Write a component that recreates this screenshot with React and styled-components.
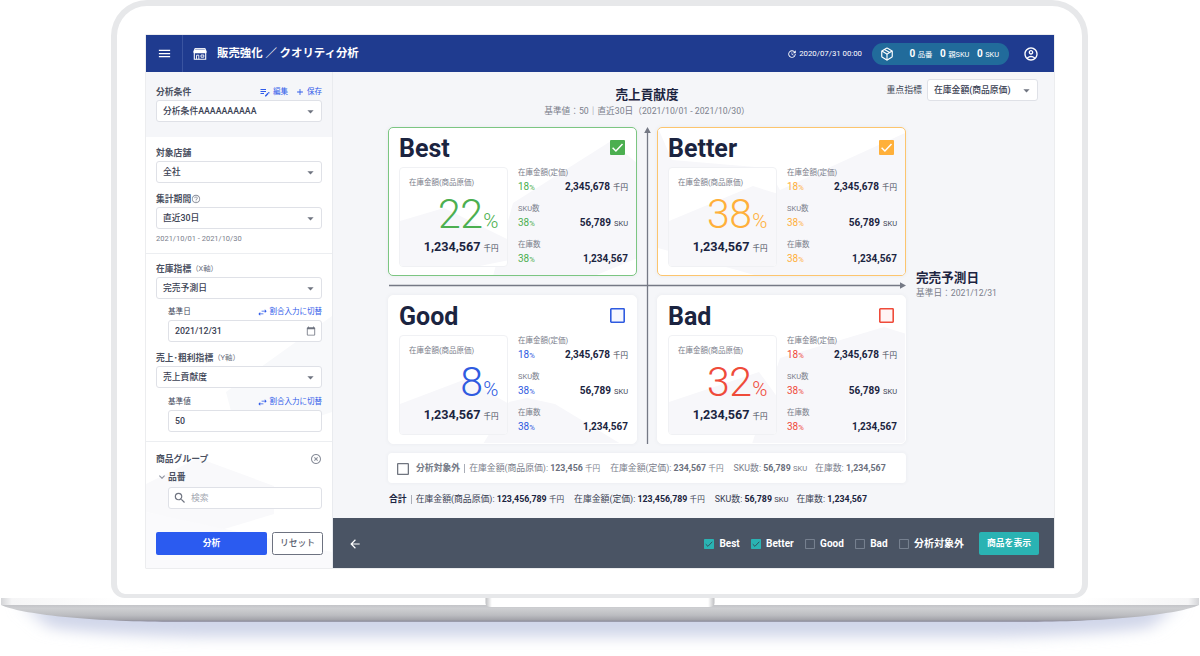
import React from "react";
import styled, { createGlobalStyle } from "styled-components";
import {
    MdAdd,
    MdArrowBack,
    MdArrowDropDown,
    MdCalendarToday,
    MdEditNote,
    MdHelpOutline,
    MdHighlightOff,
    MdKeyboardArrowDown,
    MdMenu,
    MdOutlineAccountCircle,
    MdSearch,
    MdSwapHoriz,
    MdUpdate,
} from "react-icons/md";
import { LuPackage } from "react-icons/lu";

const GlobalStyle = createGlobalStyle`
    * {
        box-sizing: border-box;
    }
    body {
        margin: 0;
        background: #fff;
        color: #3f4656;
        font-family: Roboto, "Noto Sans CJK JP", sans-serif;
        font-size: 8.8px;
        line-height: 1;
    }
    svg {
        display: block;
        flex-shrink: 0;
    }
    button {
        font-family: inherit;
        line-height: 1;
        padding: 0;
    }
`;

/* ---------- laptop ---------- */

const Stage = styled.div`
    width: 1200px;
    height: 656px;
    overflow: hidden;
    background: #fff;
`;

const Lid = styled.div`
    width: 977px;
    height: 598px;
    margin-left: 111px;
    padding: 29px 28px 26px 29px;
    border: 6px solid #e7e8ea;
    border-bottom-width: 4px;
    border-radius: 36px 36px 14px 14px;
`;

const Screen = styled.div`
    width: 908px;
    height: 533px;
    display: grid;
    grid-template-rows: 37px 496px;
    background: #f5f6f9;
    box-shadow: 0 0 0 0.5px #d9dbe0;
`;

/* ---------- header ---------- */

const Header = styled.header`
    display: flex;
    align-items: center;
    background: #1f3b8f;
    color: #fff;
`;

const MenuButton = styled.div`
    width: 37px;
    height: 100%;
    display: flex;
    align-items: center;
    justify-content: center;
    border-right: 1px solid #3a54a0;
`;

const PageIcon = styled.div`
    margin-left: 10px;
`;

const PageTitle = styled.h1`
    margin: 0 auto 0 10px;
    font-size: 11.4px;
    font-weight: 700;
    white-space: nowrap;
`;

const UpdatedAt = styled.div`
    display: flex;
    align-items: center;
    gap: 2px;
    margin-right: 10px;
    padding-top: 1px;
    font-size: 7.8px;
    white-space: nowrap;
`;

const CountPill = styled.div`
    width: 137px;
    height: 22px;
    display: flex;
    align-items: center;
    padding: 0 10px 0 8px;
    margin-right: 14px;
    border-radius: 11px;
    background: #216b9b;

    svg {
        margin-right: auto;
    }
`;

const Count = styled.span`
    margin-left: 7.5px;
    font-size: 7.4px;
    white-space: nowrap;

    b {
        margin-right: 2.5px;
        font-size: 10px;
    }
`;

const Account = styled.div`
    margin-right: 15px;
`;

/* ---------- sidebar ---------- */

const Body = styled.div`
    display: grid;
    grid-template-columns: 187px 721px;
`;

const Sidebar = styled.aside`
    position: relative;
    display: flex;
    flex-direction: column;
    background: #fff;
    border-right: 1px solid #e9ebef;
`;

const Section = styled.section`
    position: relative;
    height: ${(p) => p.$height}px;
    padding: ${(p) => p.$top || 6}px 10px 0;
    background: ${(p) => p.$bg || "transparent"};
    border-top: ${(p) => (p.$line ? "1px solid #eceef1" : "none")};
`;

const LabelRow = styled.div`
    height: 18px;
    margin-top: ${(p) => p.$gap || 0}px;
    margin-left: ${(p) => (p.$indent ? 12 : 0)}px;
    padding-top: 2px;
    display: flex;
    align-items: center;
    font-size: ${(p) => (p.$indent ? 7.6 : 8.8)}px;
    font-weight: ${(p) => (p.$indent ? 400 : 700)};
    color: ${(p) => (p.$indent ? "#40475a" : "#4b5162")};
    white-space: nowrap;

    small {
        font-size: 7.4px;
        font-weight: 400;
        color: #6b7080;
    }
`;

const LinkButton = styled.span`
    display: inline-flex;
    align-items: center;
    gap: 2px;
    margin-left: ${(p) => (p.$first ? "auto" : "7px")};
    font-size: 7.5px;
    font-weight: 400;
    color: #2f5bea;
`;

const Field = styled.div`
    height: 22px;
    margin-left: ${(p) => (p.$indent ? 12 : 0)}px;
    margin-top: ${(p) => p.$gap || 0}px;
    width: ${(p) => p.$width || "auto"};
    padding: 0 ${(p) => (p.$select ? 3 : 5)}px 0 ${(p) => (p.$muted ? 4 : 6)}px;
    display: flex;
    align-items: center;
    gap: 4px;
    border: 1px solid #dfe1e7;
    border-radius: 3px;
    background: #fff;
    color: ${(p) => (p.$muted ? "#a4a8b2" : "#3a4153")};
    font-size: 8.8px;
    font-weight: ${(p) => (p.$muted ? 400 : 500)};
    white-space: nowrap;

    svg {
        color: #6f7480;
    }
    span {
        margin-right: auto;
    }
`;

const Hint = styled.div`
    height: 18px;
    padding-top: 1px;
    display: flex;
    align-items: center;
    font-size: 7.5px;
    color: #7b808c;
`;

const Actions = styled.div`
    position: relative;
    display: flex;
    gap: 5px;
    margin-top: auto;
    padding: 0 9px 13px 10px;
`;

const RunButton = styled.button`
    width: 111px;
    height: 23px;
    border: none;
    border-radius: 2px;
    background: #2b5bf0;
    color: #fff;
    font-size: 8.8px;
    font-weight: 700;
`;

const ResetButton = styled.button`
    width: 51px;
    height: 23px;
    border: 1px solid #6d7280;
    border-radius: 2.5px;
    background: #fff;
    color: #5d6270;
    font-size: 8.8px;
    font-weight: 500;
`;

/* ---------- main ---------- */

const Main = styled.main`
    display: grid;
    grid-template-rows: 446px 50px;
`;

const Content = styled.div`
    padding-left: 55px;
    background: #f5f6f9;
`;

const Toolbar = styled.div`
    height: 55px;
    padding: 7px 16px 0 0;
    display: flex;
    align-items: flex-start;
`;

const AxisTitle = styled.div`
    width: ${(p) => (p.$side ? "auto" : "240px")};
    margin: ${(p) => (p.$side ? "144px 0 0 10px" : "9px auto 0 139px")};
    text-align: ${(p) => (p.$side ? "left" : "center")};
    font-size: 8.7px;
    color: #7b808c;
    white-space: nowrap;

    h2 {
        margin: 0 0 ${(p) => (p.$side ? 4 : 5)}px;
        font-size: 12.6px;
        line-height: 14px;
        font-weight: 700;
        color: #1c2440;
    }
`;

const Metric = styled.div`
    display: flex;
    align-items: center;
    gap: 5px;
    font-size: 8.9px;
`;

const Board = styled.div`
    display: flex;
    align-items: flex-start;
`;

const Matrix = styled.div`
    position: relative;
    width: 518px;
    display: grid;
    grid-template-columns: 249px 249px;
    grid-template-rows: 149px 149px;
    gap: 19px;
    column-gap: 20px;
`;

const Axes = styled.svg`
    position: absolute;
    left: 0;
    top: 0;
`;

const Card = styled.article`
    position: relative;
    padding: 10px 9px 0 10px;
    overflow: hidden;
    border: 1px solid ${(p) => p.$border || "#fff"};
    border-radius: 5px;
    background: #fff;
    box-shadow: 0 0 4px rgba(50, 60, 90, 0.06);
`;

const Backdrop = styled.svg`
    position: absolute;
    left: 0;
    top: 0;
`;

const CardHead = styled.div`
    position: relative;
    height: 29px;
    display: flex;
    align-items: flex-start;
    justify-content: space-between;
    padding: 0 2px 0 0;

    h3 {
        margin: -2.5px 0 0;
        font-size: 25px;
        line-height: 26px;
        font-weight: 700;
        color: #1b2440;
    }
    svg {
        margin-top: 2px;
    }
`;

const CardBody = styled.div`
    position: relative;
    display: grid;
    grid-template-columns: 109px 110px;
    gap: 10px;
`;

const Kpi = styled.div`
    position: relative;
    height: 100px;
    overflow: hidden;
    padding: 11px 8.5px 0 9px;
    border: 1px solid #f0f1f4;
    border-radius: 4px;
    background: #fff;
    color: #7b808c;
    font-size: 7.5px;
    text-align: right;
    white-space: nowrap;
`;

const KpiLabel = styled.div`
    position: relative;
    text-align: left;
`;

const KpiRate = styled.div`
    position: relative;
    height: 54px;
    font-size: 41px;
    line-height: 54px;
    font-weight: 300;
    letter-spacing: -0.6px;
    color: ${(p) => p.$color};

    small {
        margin-left: 1px;
        font-size: 20.5px;
        letter-spacing: 0;
    }
`;

const Amount = styled.div`
    position: relative;
    font-size: 7.5px;
    color: #3f4656;
    white-space: nowrap;

    b {
        font-size: ${(p) => p.$size}px;
        color: #1b2440;
    }
    span {
        margin-left: 3px;
    }
`;

const Stat = styled.div`
    height: 36px;
    padding-top: 2px;
    font-size: 7.5px;
    color: #7b808c;
    white-space: nowrap;
`;

const StatLine = styled.div`
    display: flex;
    align-items: baseline;
    justify-content: space-between;
    margin-top: 5px;
`;

const Rate = styled.span`
    font-size: 10px;
    color: ${(p) => p.$color};

    small {
        font-size: 7.6px;
    }
`;

const Summary = styled.div`
    width: 518px;
    height: ${(p) => (p.$boxed ? 30 : 32)}px;
    margin-top: ${(p) => (p.$boxed ? 9 : 0)}px;
    padding-top: 1px;
    padding-left: ${(p) => (p.$boxed ? 9 : 1)}px;
    display: flex;
    align-items: center;
    border-radius: 4px;
    background: ${(p) => (p.$boxed ? "#fff" : "transparent")};
    box-shadow: ${(p) => (p.$boxed ? "0 0 4px rgba(50, 60, 90, 0.06)" : "none")};
    color: ${(p) => (p.$boxed ? "#7b808c" : "#3a4153")};
    font-size: 8.83px;
    white-space: nowrap;

    svg {
        margin-right: 7px;
    }
    strong {
        color: ${(p) => (p.$boxed ? "#757a86" : "#1b2440")};
    }
    i {
        width: 1px;
        height: 9px;
        margin: 0 4px;
        background: #a9adb7;
    }
`;

const SummaryItem = styled.span`
    margin-right: ${(p) => p.$gap}px;

    b {
        color: ${(p) => (p.$dark ? "#1b2440" : "#6b707d")};
    }
    small {
        font-size: 7.6px;
    }
`;

const Footer = styled.footer`
    display: flex;
    align-items: center;
    padding: 1px 15px 0 15px;
    background: #4a5464;
    color: #fff;
    font-size: 10px;
    font-weight: 700;

    > svg {
        margin-right: auto;
    }
`;

const Filter = styled.label`
    display: flex;
    align-items: center;
    gap: 5px;
    margin-left: 11.4px;
    white-space: nowrap;
`;

const ShowButton = styled.button`
    width: 60px;
    height: 23px;
    margin-left: 15px;
    border: none;
    border-radius: 2px;
    background: #2ab3b3;
    color: #fff;
    font-size: 8.8px;
    font-weight: 700;
`;

const cards = [
    {
        name: "Best",
        rate: 22,
        color: "#4caf50",
        border: "#7cc682",
        checked: true,
        shape: "104,148 124,75 222,13 249,36 249,130 205,148",
        inner: "0,53 44,40 109,72 109,92 70,100 0,100",
    },
    {
        name: "Better",
        rate: 38,
        color: "#ffb03a",
        border: "#fcc56e",
        checked: true,
        shape: "0,0 14,32 110,40 122,62 249,4 249,148 100,148 0,120",
        inner: "0,53 84,18 109,26 109,98 0,98",
    },
    {
        name: "Good",
        rate: 8,
        color: "#2f5be0",
        checked: false,
        shape: "94,148 120,106 138,102 166,108 232,148",
        inner: "0,68 66,43 109,68 109,100 0,100",
    },
    {
        name: "Bad",
        rate: 32,
        color: "#ef4b3a",
        checked: false,
        shape: "94,148 122,62 226,31 249,38 249,148",
        inner: "0,66 90,36 109,62 109,100 0,100",
    },
];

const stats = [
    { label: "在庫金額(定価)", rate: 18, value: "2,345,678", unit: "千円" },
    { label: "SKU数", rate: 38, value: "56,789", unit: "SKU" },
    { label: "在庫数", rate: 38, value: "1,234,567" },
];

const excluded = [
    { label: "在庫金額(商品原価)", value: "123,456", unit: "千円", gap: 10 },
    { label: "在庫金額(定価)", value: "234,567", unit: "千円", gap: 10 },
    { label: "SKU数", value: "56,789", unit: "SKU", gap: 8 },
    { label: "在庫数", value: "1,234,567" },
];

const totals = [
    { label: "在庫金額(商品原価)", value: "123,456,789", unit: "千円", gap: 10 },
    { label: "在庫金額(定価)", value: "123,456,789", unit: "千円", gap: 10 },
    { label: "SKU数", value: "56,789", unit: "SKU", gap: 8 },
    { label: "在庫数", value: "1,234,567" },
];

const filters = [
    { label: "Best", checked: true },
    { label: "Better", checked: true },
    { label: "Good" },
    { label: "Bad" },
    { label: "分析対象外" },
];

const CheckBox = ({ size, color, checked, mark = "#fff", fill = "none" }) => (
    <svg width={size} height={size} viewBox="0 0 15 15">
        {checked ? (
            <>
                <rect width="15" height="15" rx="1" fill={color} />
                <path d="M2.6 7.8l3.3 3.2 6.6-6.9" fill="none" stroke={mark} strokeWidth="1.5" />
            </>
        ) : (
            <rect x=".8" y=".8" width="13.4" height="13.4" rx=".6" fill={fill} stroke={color} strokeWidth="1.6" />
        )}
    </svg>
);

const StoreIcon = () => (
    <svg width="14" height="12" viewBox="0 0 14 12">
        <path d="M1.8 0h10.4l1.5 3.4c.3 1-.4 1.8-1.3 1.8H1.6C.7 5.2 0 4.4.3 3.4z" fill="#fff" />
        <path d="M1.3 5v6.3h11.4V5" fill="none" stroke="#fff" strokeWidth="1.1" />
        <path d="M3.5 11.3V7.2h2.3v4.1M8 7h2.8v2.2H8z" fill="none" stroke="#fff" strokeWidth=".9" />
        <path d="M2.2 1.3h9.6" stroke="#1f3b8f" strokeWidth=".5" />
    </svg>
);

const Select = ({ value, width }) => (
    <Field $width={width} $select>
        <span>{value}</span>
        <MdArrowDropDown size={15} />
    </Field>
);

const SwitchLink = () => (
    <LinkButton $first>
        <MdSwapHoriz size={11} />
        割合入力に切替
    </LinkButton>
);

const SidePanel = () => (
    <Sidebar>
        <Backdrop width="186" height="496" viewBox="0 0 186 496">
            <path d="M80 320L186 244V340L150 352L90 358z" fill="#f8f9fb" />
            <path d="M0 412L52 386L128 414V442L75 458L0 440z" fill="#f9f9fb" />
            <path d="M0 440L186 480V496H0z" fill="#fafafc" />
        </Backdrop>
        <Section $height={65} $top={10} $bg="#f5f6f9">
            <LabelRow>
                分析条件
                <LinkButton $first>
                    <MdEditNote size={12} />
                    編集
                </LinkButton>
                <LinkButton>
                    <MdAdd size={10} />
                    保存
                </LinkButton>
            </LabelRow>
            <Select value="分析条件AAAAAAAAAA" />
        </Section>
        <Section $height={116}>
            <LabelRow>対象店舗</LabelRow>
            <Select value="全社" />
            <LabelRow $gap={6}>
                集計期間
                <MdHelpOutline size={10} color="#8a8f9b" />
            </LabelRow>
            <Select value="直近30日" />
            <Hint>2021/10/01 - 2021/10/30</Hint>
        </Section>
        <Section $height={188} $top={5} $line>
            <LabelRow>
                在庫指標<small>（X軸）</small>
            </LabelRow>
            <Select value="完売予測日" />
            <LabelRow $indent $gap={3}>
                基準日
                <SwitchLink />
            </LabelRow>
            <Field $indent>
                <span>2021/12/31</span>
                <MdCalendarToday size={10} />
            </Field>
            <LabelRow $gap={6}>
                売上･粗利指標<small>（Y軸）</small>
            </LabelRow>
            <Select value="売上貢献度" />
            <LabelRow $indent $gap={4}>
                基準値
                <SwitchLink />
            </LabelRow>
            <Field $indent>
                <span>50</span>
            </Field>
        </Section>
        <Section $height={72} $top={7} $line>
            <LabelRow>
                商品グループ
                <LinkButton $first>
                    <MdHighlightOff size={12} color="#8a8f9b" />
                </LinkButton>
            </LabelRow>
            <LabelRow>
                <MdKeyboardArrowDown size={12} color="#8a8f9b" />
                品番
            </LabelRow>
            <Field $indent $muted $gap={2}>
                <MdSearch size={14} />
                <span>検索</span>
            </Field>
        </Section>
        <Actions>
            <RunButton>分析</RunButton>
            <ResetButton>リセット</ResetButton>
        </Actions>
    </Sidebar>
);

const QuadrantCard = ({ card }) => (
    <Card $border={card.border}>
        <Backdrop width="249" height="148" viewBox="0 0 249 148">
            <polygon points={card.shape} fill="#f7f7fa" />
        </Backdrop>
        <CardHead>
            <h3>{card.name}</h3>
            <CheckBox
                size={15}
                color={card.color}
                checked={card.checked}
                fill={card.name === "Bad" ? "#fff5f4" : "#f5f7ff"}
            />
        </CardHead>
        <CardBody>
            <Kpi>
                <Backdrop width="109" height="100" viewBox="0 0 109 100">
                    <polygon points={card.inner} fill="#f7f7fa" />
                </Backdrop>
                <KpiLabel>在庫金額(商品原価)</KpiLabel>
                <KpiRate $color={card.color}>
                    {card.rate}
                    <small>%</small>
                </KpiRate>
                <Amount $size={12.6}>
                    <b>1,234,567</b>
                    <span>千円</span>
                </Amount>
            </Kpi>
            <div>
                {stats.map((stat) => (
                    <Stat key={stat.label}>
                        {stat.label}
                        <StatLine>
                            <Rate $color={card.color}>
                                {stat.rate}
                                <small>%</small>
                            </Rate>
                            <Amount $size={10}>
                                <b>{stat.value}</b>
                                {stat.unit && <span>{stat.unit}</span>}
                            </Amount>
                        </StatLine>
                    </Stat>
                ))}
            </div>
        </CardBody>
    </Card>
);

const SummaryItems = ({ items, dark }) =>
    items.map((item) => (
        <SummaryItem key={item.label} $gap={item.gap || 0} $dark={dark}>
            {item.label}: <b>{item.value}</b> <small>{item.unit}</small>
        </SummaryItem>
    ));

const LaptopBase = () => (
    <svg width="1200" height="58" viewBox="0 598 1200 58">
        <defs>
            <linearGradient id="metal" x1="0" y1="605" x2="0" y2="622" gradientUnits="userSpaceOnUse">
                <stop offset="0" stopColor="#c3c4c8" />
                <stop offset=".2" stopColor="#cecfd2" />
                <stop offset=".6" stopColor="#bcbdc1" />
                <stop offset=".88" stopColor="#a2a2a9" />
                <stop offset="1" stopColor="#807e92" />
            </linearGradient>
            <linearGradient id="deck" x1="1" x2="1199" gradientUnits="userSpaceOnUse">
                <stop offset="0" stopColor="#d4d5d8" />
                <stop offset=".009" stopColor="#f5f5f6" />
                <stop offset=".1" stopColor="#fff" />
                <stop offset=".9" stopColor="#fff" />
                <stop offset=".991" stopColor="#f5f5f6" />
                <stop offset="1" stopColor="#d4d5d8" />
            </linearGradient>
            <linearGradient id="notch" x1="485" x2="715" gradientUnits="userSpaceOnUse">
                <stop offset="0" stopColor="#b9babd" />
                <stop offset=".03" stopColor="#fff" />
                <stop offset=".97" stopColor="#fff" />
                <stop offset="1" stopColor="#b9babd" />
            </linearGradient>
            <filter id="soft" x="-10%" y="-100%" width="120%" height="300%">
                <feGaussianBlur stdDeviation="9 7" />
            </filter>
        </defs>
        <path d="M22 604H1178L1150 628Q1080 636 1000 637H200Q120 636 50 628z" fill="#d0d6e9" filter="url(#soft)" />
        <path d="M1 605H1199C1180 614 1110 621.7 1030 621.7H170C90 621.7 20 614 1 605z" fill="url(#metal)" />
        <path d="M1 598H1199V605H1z" fill="url(#deck)" />
        <path d="M485.5 598H714.5V603Q714.5 607 709 607H491Q485.5 607 485.5 603z" fill="url(#notch)" />
    </svg>
);

const App = () => {
    return (
        <>
            <GlobalStyle />
            <Stage>
                <Lid>
                    <Screen>
                        <Header>
                            <MenuButton>
                                <MdMenu size={15} />
                            </MenuButton>
                            <PageIcon>
                                <StoreIcon />
                            </PageIcon>
                            <PageTitle>販売強化 ／ クオリティ分析</PageTitle>
                            <UpdatedAt>
                                <MdUpdate size={10} />
                                2020/07/31 00:00
                            </UpdatedAt>
                            <CountPill>
                                <LuPackage size={14} />
                                <Count>
                                    <b>0</b>品番
                                </Count>
                                <Count>
                                    <b>0</b>親SKU
                                </Count>
                                <Count>
                                    <b>0</b>SKU
                                </Count>
                            </CountPill>
                            <Account>
                                <MdOutlineAccountCircle size={16} />
                            </Account>
                        </Header>
                        <Body>
                            <SidePanel />
                            <Main>
                                <Content>
                                    <Toolbar>
                                        <AxisTitle>
                                            <h2>売上貢献度</h2>
                                            基準値：50｜直近30日（2021/10/01 - 2021/10/30）
                                        </AxisTitle>
                                        <Metric>
                                            重点指標
                                            <Select value="在庫金額(商品原価)" width="111px" />
                                        </Metric>
                                    </Toolbar>
                                    <Board>
                                        <Matrix>
                                            {cards.map((card) => (
                                                <QuadrantCard key={card.name} card={card} />
                                            ))}
                                            <Axes width="518" height="317" viewBox="0 0 518 317">
                                                <path
                                                    d="M259.5 4V317M1 158.5H513"
                                                    stroke="#757985"
                                                    strokeWidth="1.3"
                                                />
                                                <path
                                                    d="M259.5 0l3.3 6h-6.6zM518 158.5l-6-3.3v6.6z"
                                                    fill="#757985"
                                                />
                                            </Axes>
                                        </Matrix>
                                        <AxisTitle $side>
                                            <h2>完売予測日</h2>
                                            基準日：2021/12/31
                                        </AxisTitle>
                                    </Board>
                                    <Summary $boxed>
                                        <CheckBox size={12} color="#70757f" />
                                        <strong>分析対象外</strong>
                                        <i />
                                        <SummaryItems items={excluded} />
                                    </Summary>
                                    <Summary>
                                        <strong>合計</strong>
                                        <i />
                                        <SummaryItems items={totals} dark />
                                    </Summary>
                                </Content>
                                <Footer>
                                    <MdArrowBack size={14} />
                                    {filters.map((filter) => (
                                        <Filter key={filter.label}>
                                            <CheckBox
                                                size={10}
                                                color={filter.checked ? "#2ab3b3" : "#76808f"}
                                                checked={filter.checked}
                                                mark="#34505e"
                                            />
                                            {filter.label}
                                        </Filter>
                                    ))}
                                    <ShowButton>商品を表示</ShowButton>
                                </Footer>
                            </Main>
                        </Body>
                    </Screen>
                </Lid>
                <LaptopBase />
            </Stage>
        </>
    );
};

export default App;
